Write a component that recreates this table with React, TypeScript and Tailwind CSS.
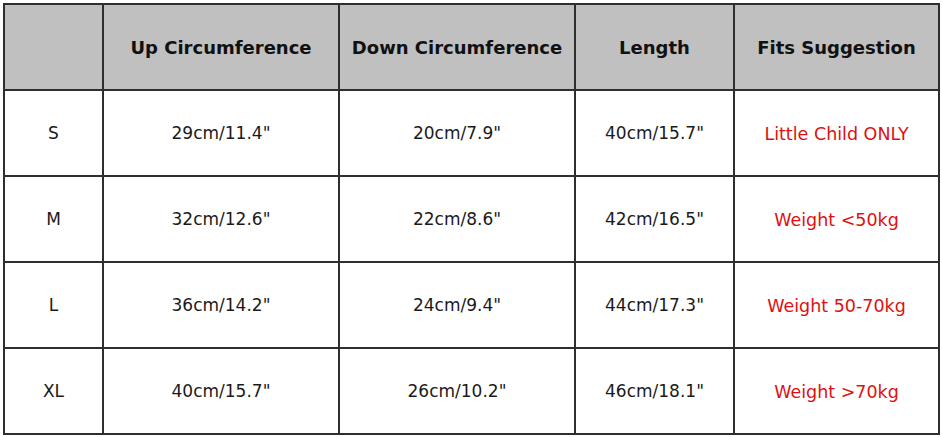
const headers = ["", "Up Circumference", "Down Circumference", "Length", "Fits Suggestion"];

const rows = [
  ["S", "29cm/11.4\"", "20cm/7.9\"", "40cm/15.7\"", "Little Child ONLY"],
  ["M", "32cm/12.6\"", "22cm/8.6\"", "42cm/16.5\"", "Weight <50kg"],
  ["L", "36cm/14.2\"", "24cm/9.4\"", "44cm/17.3\"", "Weight 50-70kg"],
  ["XL", "40cm/15.7\"", "26cm/10.2\"", "46cm/18.1\"", "Weight >70kg"],
];

export default function App() {
  return (
    <div
      className="w-[942px] h-[437px] bg-white pt-[3px] pl-[3px]"
      style={{ fontFamily: "'DejaVu Sans', Tahoma, sans-serif" }}
    >
      <div className="grid w-fit grid-cols-[97px_234px_234px_157px_203px] auto-rows-[84px] gap-[2px] bg-[#2e2e2e] p-[2px]">
        {headers.map((h, i) => (
          <div
            key={i}
            className="flex items-center justify-center bg-[#c0c0c0] text-[18px] font-bold text-[#111]"
          >
            {h}
          </div>
        ))}
        {rows.map((row) =>
          row.map((cell, i) => (
            <div
              key={row[0] + i}
              className={`flex items-center justify-center bg-white pt-[2px] ${
                i === 4 ? "text-[17.5px] text-[#e01010]" : "text-[17px] text-[#1a1a1a]"
              }`}
            >
              {cell}
            </div>
          ))
        )}
      </div>
    </div>
  );
}
